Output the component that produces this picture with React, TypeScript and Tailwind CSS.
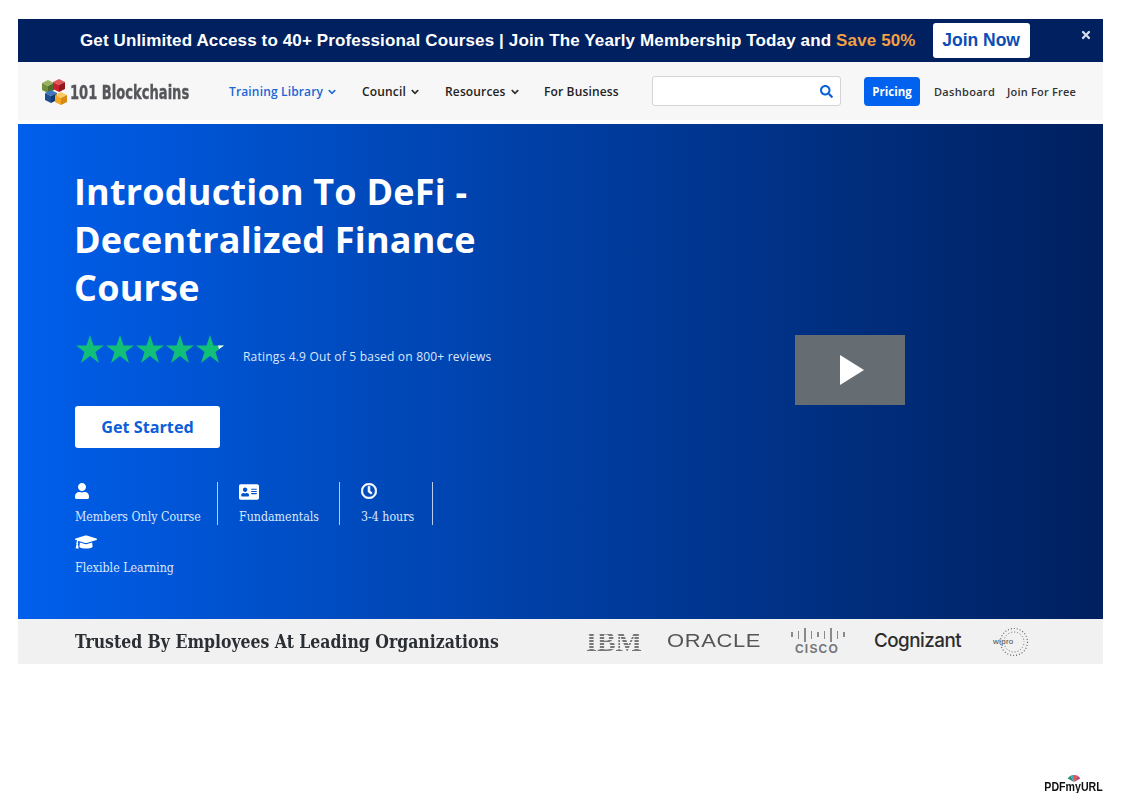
import { FaAddressCard, FaChevronDown, FaGraduationCap, FaRegClock, FaSearch, FaTimes, FaUser } from "react-icons/fa";

const openSans = "font-['Open_Sans','Noto_Sans',sans-serif]";
const slab = "font-['DejaVu_Serif_Condensed','DejaVu_Serif',serif]";

const navLinks = [
  { label: "Training Library", active: true, caret: true, width: "w-[133px]" },
  { label: "Council", active: false, caret: true, width: "w-[83px]" },
  { label: "Resources", active: false, caret: true, width: "w-[99px]" },
  { label: "For Business", active: false, caret: false, width: "w-[108px]" },
];

const features = [
  { label: "Members Only Course", width: "w-[143px]", icon: <FaUser className="h-[16px] w-[14px]" /> },
  { label: "Fundamentals", width: "w-[122px] pl-[21px]", icon: <FaAddressCard className="h-[18px] w-[20px]" /> },
  { label: "3-4 hours", width: "w-[93px] pl-[21px]", icon: <FaRegClock className="h-[16px] w-[16px]" stroke="currentColor" strokeWidth={24} /> },
];

const Cube = ({ x, y, top, side, dark }: { x: number; y: number; top: string; side: string; dark: string }) => (
  <g transform={`translate(${x} ${y})`}>
    <polygon points="6,0 12,3 6,6 0,3" fill={top} />
    <polygon points="0,3 6,6 6,13 0,10" fill={side} />
    <polygon points="12,3 6,6 6,13 12,10" fill={dark} />
  </g>
);

const LogoMark = () => (
  <svg viewBox="0 0 25 26" className="h-[26px] w-[25px] shrink-0">
    <Cube x={0} y={1} top="#9bb061" side="#6f8f3d" dark="#4e6b2a" />
    <Cube x={11} y={0} top="#e0545a" side="#c8232c" dark="#96161d" />
    <Cube x={3} y={11} top="#3f78bd" side="#1d4f91" dark="#143a6d" />
    <Cube x={13} y={13} top="#fbc965" side="#f5a623" dark="#d98a10" />
  </svg>
);

const Star = ({ notch }: { notch?: boolean }) => (
  <svg viewBox="0 0 30 28" className="h-[28px] w-[30px] shrink-0">
    <polygon points="15,0 18.5,10.5 29,10.5 20.5,17 24,28 15,21 6,28 9.5,17 1,10.5 11.5,10.5" fill="#12bf79" />
    {notch && <polygon points="23,10.5 29,10.5 24,14" fill="#ffffff" />}
  </svg>
);

const CiscoBars = () => (
  <div className="ml-[2px] flex h-[14px] items-center gap-[5px]">
    {[5, 8, 14, 8, 5, 8, 14, 8, 5].map((h, i) => (
      <span key={i} className="w-[1.5px] bg-[#8a8a8a]" style={{ height: h }} />
    ))}
  </div>
);

export default function App() {
  return (
    <div className="relative h-[793px] w-[1123px] overflow-hidden bg-white pt-[19px] pl-[18px]">
      <div className="w-[1085px]">
        {/* promo banner */}
        <div className="flex h-[43px] items-center bg-[#012060] pl-[62px] font-['Liberation_Sans',Arial,sans-serif] font-bold">
          <p className="shrink-0 text-[17px] tracking-[0.13px] whitespace-nowrap text-white">
            Get Unlimited Access to 40+ Professional Courses | Join The Yearly Membership Today and{" "}
            <span className="text-[#f2a145]">Save 50%</span>
          </p>
          <button className="ml-[17px] flex h-[35px] w-[97px] shrink-0 items-center justify-center rounded-[3px] bg-white text-[17.5px] whitespace-nowrap text-[#0b4db5]">
            Join Now
          </button>
          <FaTimes className="mb-[11px] ml-[50px] h-[12px] w-[12px] shrink-0 text-[#d5dbe8]" />
        </div>

        {/* nav */}
        <div className={`flex h-[58px] items-center bg-[#f7f7f7] pt-[2px] ${openSans}`}>
          <div className="ml-[24px] flex w-[187px] items-center gap-[3px]">
            <LogoMark />
            <span className="inline-block origin-left scale-x-[0.654] font-['DejaVu_Sans',sans-serif] text-[20px] font-bold whitespace-nowrap text-[#55565a] [-webkit-text-stroke:0.4px_#55565a]">
              101 Blockchains
            </span>
          </div>
          {navLinks.map((link) => (
            <a
              key={link.label}
              className={`flex items-center gap-[5px] text-[12px] font-semibold tracking-[0.15px] whitespace-nowrap ${link.width} ${
                link.active ? "text-[#1a66d6]" : "text-[#222222]"
              }`}
            >
              {link.label}
              {link.caret && <FaChevronDown className="h-[8px] w-[8px]" stroke="currentColor" strokeWidth={30} />}
            </a>
          ))}
          <div className="mb-[2px] flex h-[30px] w-[189px] items-center justify-end rounded-[3px] border border-[#d4d4d4] bg-white pr-[7px]">
            <FaSearch className="h-[13px] w-[13px] text-[#0b62d6]" />
          </div>
          <button className="mb-[1px] ml-[23px] h-[29px] w-[56px] rounded-[4px] bg-[#0062ee] text-[11.5px] font-bold text-white">
            Pricing
          </button>
          <a className="ml-[14px] text-[11px] font-semibold tracking-[0.3px] text-[#333333]">Dashboard</a>
          <a className="ml-[12px] text-[11px] font-semibold tracking-[0.2px] text-[#333333]">Join For Free</a>
        </div>

        {/* hero */}
        <div className="mt-[4px] flex h-[495px] bg-linear-to-r from-[#005fec] to-[#00205f]">
          <div className="w-[577px] pt-[44px] pl-[57px]">
            <h1 className={`-ml-[1px] text-[36px] leading-[48px] font-bold tracking-[0.2px] text-white ${openSans}`}>
              Introduction To DeFi -<br />
              Decentralized Finance<br />
              Course
            </h1>
            <div className="mt-[23px] flex items-start">
              <div className="flex">
                <Star />
                <Star />
                <Star />
                <Star />
                <Star notch />
              </div>
              <span className={`mt-[14px] ml-[18px] text-[12px] leading-[16px] tracking-[0.2px] text-[#dce7fb] ${openSans}`}>
                Ratings 4.9 Out of 5 based on 800+ reviews
              </span>
            </div>
            <button className={`mt-[41px] block h-[42px] w-[145px] rounded-[3px] bg-white text-[16.2px] font-bold text-[#0b5ed7] ${openSans}`}>
              Get Started
            </button>
            <div className={`mt-[34px] flex w-[450px] flex-wrap text-[12.3px] leading-[16px] text-[#dce7fb] ${slab}`}>
              {features.map((f) => (
                <div
                  key={f.label}
                  className={`flex h-[43px] flex-col justify-between border-r border-[#b9cdf0] pt-[1px] ${f.width}`}
                >
                  <span className="text-white">{f.icon}</span>
                  <span className="whitespace-nowrap">{f.label}</span>
                </div>
              ))}
              <div className="mt-[8px] flex h-[43px] w-full flex-col justify-between">
                <FaGraduationCap className="h-[18px] w-[22px] text-white" />
                <span className="whitespace-nowrap">Flexible Learning</span>
              </div>
            </div>
          </div>
          <div className="flex flex-1 items-center justify-center">
            <div className="mb-[3px] ml-[2px] flex h-[70px] w-[110px] items-center justify-center bg-[#656c72] pl-[3px]">
              <svg viewBox="0 0 24 30" className="h-[30px] w-[24px]">
                <polygon points="0,0 24,15 0,30" fill="#ffffff" />
              </svg>
            </div>
          </div>
        </div>

        {/* trusted by */}
        <div className="flex h-[45px] items-center bg-[#f1f1f1] pl-[57px]">
          <div className="w-[511px] shrink-0">
            <h2 className={`inline-block origin-left scale-x-[0.918] text-[19px] font-bold whitespace-nowrap text-[#2b2f33] ${slab}`}>
              Trusted By Employees At Leading Organizations
            </h2>
          </div>
          <span className="w-[81px] bg-[repeating-linear-gradient(180deg,#777_0,#777_2px,transparent_2px,transparent_3px)] bg-clip-text font-['Liberation_Serif',serif] text-[28px] leading-none font-bold text-transparent">
            IBM
          </span>
          <div className="w-[122px]">
            <span className="inline-block origin-left scale-x-[1.22] font-['Liberation_Sans',sans-serif] text-[18px] tracking-[0.5px] text-[#555555]">ORACLE</span>
          </div>
          <div className="flex w-[84px] flex-col items-start">
            <CiscoBars />
            <span className="ml-[6px] font-['Liberation_Sans',sans-serif] text-[12px] leading-[14px] font-bold tracking-[1.2px] text-[#777777]">CISCO</span>
          </div>
          <span className="ml-[1px] w-[119px] font-['Inter',sans-serif] text-[18.8px] font-medium tracking-[-0.5px] text-[#2c2c2c]">Cognizant</span>
          <div className="relative flex h-[30px] w-[37px] items-center">
            <span className="font-['Liberation_Sans',sans-serif] text-[8px] tracking-[0.3px] text-[#444444]">wipro</span>
            <svg viewBox="0 0 30 30" className="absolute top-0 left-[6px] h-[30px] w-[30px]">
              <circle cx="15" cy="15" r="13.5" fill="none" stroke="#666666" strokeWidth="1.2" strokeDasharray="1 2" />
              <circle cx="15" cy="15" r="10" fill="none" stroke="#666666" strokeWidth="1" strokeDasharray="1 2" strokeDashoffset="1" />
            </svg>
          </div>
        </div>

        {/* pdf watermark */}
        <div className="mt-[111px] flex flex-col items-end">
          <svg viewBox="0 0 20 10" className="mr-[20px] h-[7px] w-[18px]">
            <path d="M10 10 L1 5 A10 10 0 0 1 5 1 Z" fill="#2e8f6f" />
            <path d="M10 10 L5 1 A10 10 0 0 1 10 0 Z" fill="#3ba7c9" />
            <path d="M10 10 L10 0 A10 10 0 0 1 15 1 Z" fill="#e2574c" />
            <path d="M10 10 L15 1 A10 10 0 0 1 19 5 Z" fill="#b5477f" />
          </svg>
          <span className="inline-block origin-right scale-x-[0.85] font-['Liberation_Sans',sans-serif] text-[12.5px] leading-[11px] font-bold text-[#111111]">PDFmyURL</span>
        </div>
      </div>
    </div>
  );
}
